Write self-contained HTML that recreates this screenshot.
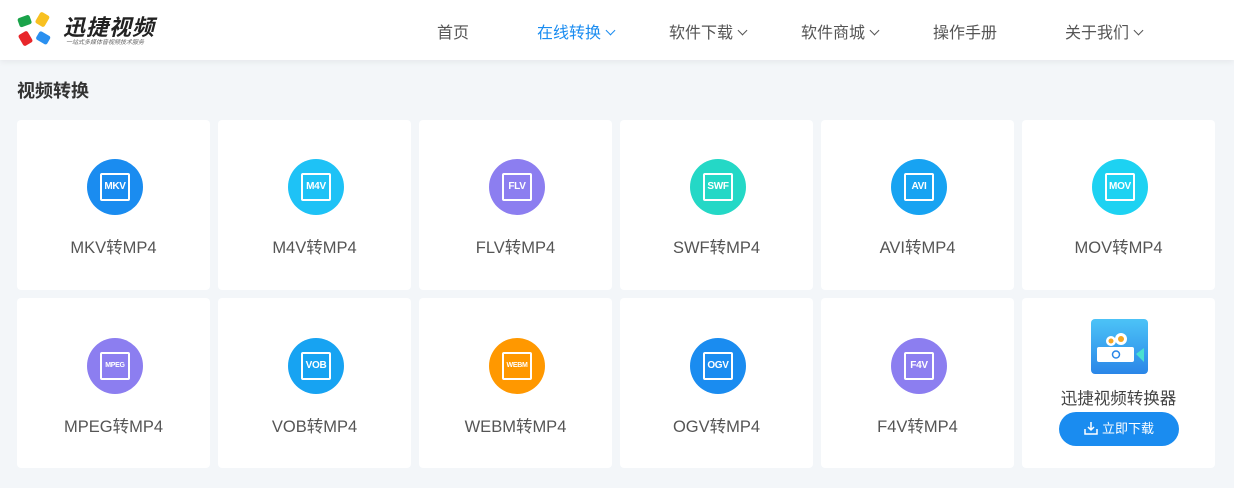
<!DOCTYPE html>
<html><head><meta charset="utf-8"><style>
*{margin:0;padding:0;box-sizing:border-box}
body{width:1234px;height:488px;background:#f3f6f9;font-family:"Liberation Sans","Noto Sans CJK SC",sans-serif;position:relative;overflow:hidden}
.hd{position:absolute;left:0;top:0;width:1234px;height:60px;background:#fff;box-shadow:0 2px 6px rgba(0,0,0,.06)}
.nav{position:absolute;top:19px;font-size:16px;color:#555;white-space:nowrap}
.nav.on{color:#1a8cf0}
.chev{display:inline-block;width:7px;height:7px;border-right:1.5px solid currentColor;border-bottom:1.5px solid currentColor;transform:rotate(45deg);margin-left:6px;position:relative;top:-4px}
h2{position:absolute;left:17px;top:77px;font-size:18px;color:#333;font-weight:bold}
.card{position:absolute;width:193px;background:#fff;border-radius:4px;text-align:center}
.ci{position:absolute;left:70px;width:56px;height:56px;border-radius:50%}
.ci span{position:absolute;left:13px;top:14px;width:30px;height:28px;border:2px solid #fff;border-radius:2px;color:#fff;font-size:10px;font-weight:bold;line-height:24px;text-align:center;letter-spacing:-.3px}
.lb{position:absolute;left:0;width:193px;font-size:16.5px;color:#555}
</style></head><body>
<div class="hd">
<svg style="position:absolute;left:15px;top:10px" width="40" height="38" viewBox="0 0 36 36">
<rect x="2" y="6" width="12" height="9" rx="2" fill="#1aa34a" transform="rotate(-20 8 10)"/>
<rect x="20" y="3" width="10" height="12" rx="2" fill="#f8c020" transform="rotate(30 25 9)"/>
<rect x="4" y="21" width="10" height="12" rx="2" fill="#e8262a" transform="rotate(-30 9 27)"/>
<rect x="20" y="22" width="12" height="9" rx="2" fill="#2a90f0" transform="rotate(30 26 26)"/>
</svg>
<div style="position:absolute;left:63px;top:10px;font-size:22px;font-weight:bold;font-style:italic;color:#222;letter-spacing:1px">迅捷视频</div>
<div style="position:absolute;left:66px;top:37px;font-size:6px;color:#666;font-style:italic">一站式多媒体音视频技术服务</div>
<div class="nav" style="left:437px">首页</div>
<div class="nav on" style="left:537px">在线转换<i class="chev"></i></div>
<div class="nav" style="left:669px">软件下载<i class="chev"></i></div>
<div class="nav" style="left:801px">软件商城<i class="chev"></i></div>
<div class="nav" style="left:933px">操作手册</div>
<div class="nav" style="left:1065px">关于我们<i class="chev"></i></div>
</div>
<h2>视频转换</h2>

<div class="card" style="left:17px;top:120px;height:170px"><div class="ci" style="top:39px;background:#1a8cf0"><span>MKV</span></div><div class="lb" style="top:114px">MKV转MP4</div></div>
<div class="card" style="left:218px;top:120px;height:170px"><div class="ci" style="top:39px;background:#1ec2f6"><span>M4V</span></div><div class="lb" style="top:114px">M4V转MP4</div></div>
<div class="card" style="left:419px;top:120px;height:170px"><div class="ci" style="top:39px;background:#8c7ef0"><span>FLV</span></div><div class="lb" style="top:114px">FLV转MP4</div></div>
<div class="card" style="left:620px;top:120px;height:170px"><div class="ci" style="top:39px;background:#24d8c6"><span>SWF</span></div><div class="lb" style="top:114px">SWF转MP4</div></div>
<div class="card" style="left:821px;top:120px;height:170px"><div class="ci" style="top:39px;background:#17a3f2"><span>AVI</span></div><div class="lb" style="top:114px">AVI转MP4</div></div>
<div class="card" style="left:1022px;top:120px;height:170px"><div class="ci" style="top:39px;background:#1dd2f2"><span>MOV</span></div><div class="lb" style="top:114px">MOV转MP4</div></div>

<div class="card" style="left:17px;top:298px;height:170px"><div class="ci" style="top:40px;background:#8c7ef0"><span style="font-size:7px">MPEG</span></div><div class="lb" style="top:115px">MPEG转MP4</div></div>
<div class="card" style="left:218px;top:298px;height:170px"><div class="ci" style="top:40px;background:#17a3f2"><span>VOB</span></div><div class="lb" style="top:115px">VOB转MP4</div></div>
<div class="card" style="left:419px;top:298px;height:170px"><div class="ci" style="top:40px;background:#ff9800"><span style="font-size:7px">WEBM</span></div><div class="lb" style="top:115px">WEBM转MP4</div></div>
<div class="card" style="left:620px;top:298px;height:170px"><div class="ci" style="top:40px;background:#1a8cf0"><span>OGV</span></div><div class="lb" style="top:115px">OGV转MP4</div></div>
<div class="card" style="left:821px;top:298px;height:170px"><div class="ci" style="top:40px;background:#8c7ef0"><span>F4V</span></div><div class="lb" style="top:115px">F4V转MP4</div></div>
<div class="card" style="left:1022px;top:298px;height:170px">
<svg style="position:absolute;left:69px;top:21px" width="57" height="55" viewBox="0 0 57 55">
<defs><linearGradient id="g" x1="0" y1="0" x2="0" y2="1"><stop offset="0" stop-color="#4cc3f7"/><stop offset="1" stop-color="#2a86e8"/></linearGradient></defs>
<rect width="57" height="55" rx="4" fill="url(#g)"/>
<circle cx="20" cy="22" r="5" fill="#fff"/><circle cx="20" cy="22" r="2.5" fill="#f5a623"/>
<circle cx="30" cy="20" r="6" fill="#fff"/><circle cx="30" cy="20" r="3" fill="#f5a623"/>
<rect x="6" y="28" width="37" height="15" rx="2" fill="#fff"/>
<path d="M45 35 L53 29 V43 Z" fill="#49e0d0"/>
<circle cx="25" cy="35.5" r="3.5" fill="none" stroke="#2a86e8" stroke-width="1.5"/>
</svg>
<div class="lb" style="top:87px;color:#444">迅捷视频转换器</div>
<div style="position:absolute;left:37px;top:114px;width:120px;height:34px;border-radius:17px;background:#1a8cf0;color:#fff;font-size:13px;line-height:34px;text-align:center">
<svg width="14" height="14" viewBox="0 0 14 14" style="vertical-align:-2px;margin-right:4px"><path d="M1 8v5h12V8M7 1v8M4 6l3 3 3-3" fill="none" stroke="#fff" stroke-width="1.5"/></svg>立即下载</div>
</div>
</body></html>
